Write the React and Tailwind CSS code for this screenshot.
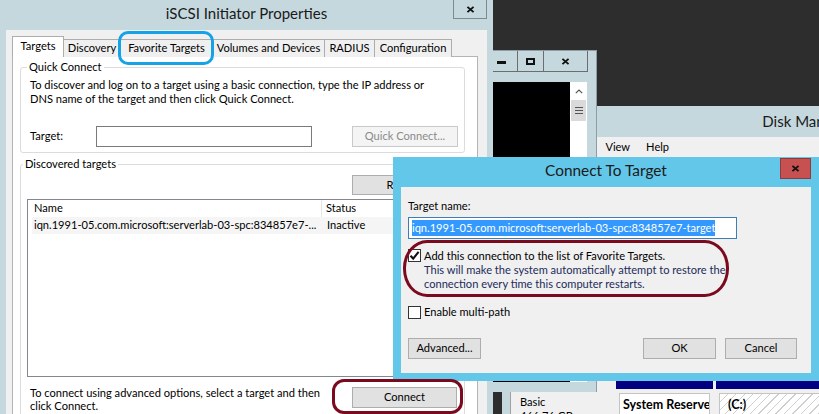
import React from 'react';

function Cross({ className = '', color = '#111' }) {
  return (
    <svg viewBox="0 0 10 8" className={className}>
      <path d="M1.5 1 L8.5 7 M8.5 1 L1.5 7" stroke={color} strokeWidth="2.2" fill="none" />
    </svg>
  );
}

function Button({ children, className = '', disabled }) {
  const tone = disabled
    ? 'border-[#c9c9c9] bg-[#f4f4f4] text-[#8a8a8a]'
    : 'border-[#adadad] bg-[#e1e1e1] text-black';
  return (
    <div className={`flex items-center justify-center whitespace-nowrap border ${tone} ${className}`}>{children}</div>
  );
}

function Check({ checked }) {
  return (
    <div className="w-[13px] h-[13px] shrink-0 border border-[#333] bg-white flex items-center justify-center">
      {checked && (
        <svg viewBox="0 0 11 11" className="w-[11px] h-[11px]">
          <path d="M1.5 5.8 L4.2 8.6 L9.6 1.8" stroke="#111" strokeWidth="2.1" fill="none" />
        </svg>
      )}
    </div>
  );
}

function IscsiWindow() {
  const tabs = [
    ['Discovery', 'w-[57px]'],
    ['Favorite Targets', 'w-[92px]'],
    ['Volumes and Devices', 'w-[112px]'],
    ['RADIUS', 'w-[50px]'],
    ['Configuration', 'w-[77px]'],
  ];

  return (
    <div className="absolute left-0 top-0 z-30 w-[493px] h-[440px] flex flex-col bg-[#c5d8de] px-[6px]">
      {/* title bar */}
      <div className="relative h-[30px] shrink-0 flex items-center justify-center">
        <span className="text-[15px] text-[#1a1a1a] -mt-[3px]">iSCSI Initiator Properties</span>
        <div className="absolute right-0 top-0 w-[34px] h-[19px] border border-t-0 border-[#7c8b90] flex items-center justify-center">
          <Cross className="w-[9px] h-[7px]" />
        </div>
      </div>

      <div className="flex-1 bg-[#f0f0f0] pl-[6px] pr-[9px] pt-[6px]">
        {/* tabs */}
        <div className="relative z-10 flex items-end h-[21px]">
          <div className="w-[52px] h-[21px] bg-white border border-b-0 border-[#adadad] flex items-center justify-center pb-[2px]">
            Targets
          </div>
          {tabs.map(([t, w]) => (
            <div key={t} className={`${w} h-[18px] bg-[#f0f0f0] border border-b-0 border-l-0 border-[#adadad] flex items-center justify-center whitespace-nowrap`}>
              {t}
            </div>
          ))}
        </div>

        <div className="-mt-px h-[400px] bg-white border border-[#b4b4b4] pl-[7px] pr-[12px] pt-[3px]">
          {/* Quick Connect */}
          <fieldset className="border border-[#dcdcdc] rounded-[3px] pl-[9px] pr-[6px] pb-[5px]">
            <legend className="-ml-[3px] px-[2px] leading-[14px]">Quick Connect</legend>
            <p className="mt-[4px] leading-[14px] whitespace-nowrap">
              To discover and log on to a target using a basic connection, type the IP address or
              <br />
              DNS name of the target and then click Quick Connect.
            </p>
            <div className="mt-[20px] flex items-center">
              <span className="w-[66px]">Target:</span>
              <div className="w-[216px] h-[21px] border border-[#7a7a7a] bg-white" />
              <Button disabled className="ml-[40px] w-[106px] h-[21px]">Quick Connect...</Button>
            </div>
          </fieldset>

          {/* Discovered targets */}
          <fieldset className="mt-[4px] border border-[#dcdcdc] rounded-[3px] px-[6px] h-[280px]">
            <legend className="-ml-[4px] px-[2px] leading-[14px]">Discovered targets</legend>
            <div className="mt-[4px] flex justify-end">
              <Button className="w-[106px] h-[20px]">Refresh</Button>
            </div>
            <div className="mt-[4px] h-[178px] border border-[#828790] bg-white">
              <div className="flex h-[17px] items-center">
                <div className="w-[294px] h-full pl-[6px] border-r border-[#e5e5e5] flex items-center">Name</div>
                <div className="pl-[4px]">Status</div>
              </div>
              <div className="flex h-[17px] items-center ml-[4px] bg-[#f5f5f5]">
                <div className="w-[290px] pl-[2px] whitespace-nowrap overflow-hidden">iqn.1991-05.com.microsoft:serverlab-03-spc:834857e7-...</div>
                <div className="pl-[5px]">Inactive</div>
              </div>
            </div>
            <div className="mt-[10px] flex justify-between items-start">
              <p className="ml-[3px] -mt-[1px] leading-[13px] whitespace-nowrap">
                To connect using advanced options, select a target and then
                <br />
                click Connect.
              </p>
              <Button className="w-[105px] h-[21px] mr-[1px]">Connect</Button>
            </div>
          </fieldset>
        </div>
      </div>
    </div>
  );
}

function ConsoleWindow() {
  return (
    <div className="absolute left-[470px] top-[50px] z-20 w-[127px] h-[342px] flex flex-col bg-[#c5d8de] border-t border-r border-[#8d9da3]">
      <div className="h-[21px] flex justify-end pr-[8px]">
        <div className="w-[26px] h-full border-l border-b border-[#6d6d6d] flex items-end justify-end pr-[11px] pb-[7px]">
          <div className="w-[9px] h-[3px] bg-[#111]" />
        </div>
        <div className="w-[26px] h-full border-l border-b border-[#6d6d6d] flex items-center justify-center">
          <div className="w-[9px] h-[7px] border-2 border-[#111]" />
        </div>
        <div className="w-[45px] h-full border-l border-r border-b border-[#6d6d6d] flex items-center justify-center">
          <Cross className="w-[9px] h-[7px]" />
        </div>
      </div>
      <div className="mt-[10px] mr-[9px] ml-[9px] h-[300px] flex">
        <div className="flex-1 bg-black" />
        <div className="w-[17px] bg-white flex flex-col">
          <div className="h-[18px] flex items-center justify-center">
            <svg viewBox="0 0 8 5" className="w-[8px] h-[5px]">
              <path d="M0.8 4.2 L4 1 L7.2 4.2" stroke="#555" strokeWidth="1.2" fill="none" />
            </svg>
          </div>
          <div className="h-[21px] mx-[1px] bg-[#dadada] flex flex-col items-center justify-center gap-[2px]">
            <div className="w-[8px] h-px bg-[#555]" />
            <div className="w-[8px] h-px bg-[#555]" />
            <div className="w-[8px] h-px bg-[#555]" />
          </div>
        </div>
      </div>
    </div>
  );
}

function DiskWindow() {
  return (
    <div className="absolute left-[502px] top-[106px] z-10 w-[640px] h-[330px] flex flex-col bg-[#c5d8de] px-[8px]">
      <div className="h-[31px] shrink-0 flex items-center justify-center text-[15px] text-[#1a1a1a]">Disk Management</div>
      <div className="flex-1 bg-[#f0f0f0] flex flex-col">
        <div className="h-[21px] flex items-center pl-[6px]">
          <span className="px-[8px]">File</span>
          <span className="px-[8px]">Action</span>
          <span className="px-[8px]">View</span>
          <span className="px-[8px]">Help</span>
        </div>
        <div className="h-[223px] bg-white" />
        <div className="flex h-[60px]">
          <div className="w-[102px] border-l border-[#a0a0a0] pl-[9px] pt-[14px] leading-[14px]">
            <div>Basic</div>
            <div>466.76 GB</div>
          </div>
          <div className="ml-[4px] w-[97px] flex flex-col">
            <div className="h-[8px] bg-[#000080]" />
            <div className="flex-1 px-[3px] pt-[4px]">
              <div className="h-full bg-white border border-[#c4c4c4] pl-[3px] pt-[2px] font-bold text-[12.5px] whitespace-nowrap overflow-hidden">
                System Reserved
              </div>
            </div>
          </div>
          <div className="ml-[3px] flex-1 flex flex-col">
            <div className="h-[8px] bg-[#000080]" />
            <div className="flex-1 px-[3px] pt-[4px]">
              <div className="h-full border border-[#c4c4c4] pl-[8px] pt-[2px] font-bold text-[12.5px] bg-[repeating-linear-gradient(135deg,#ffffff_0px,#ffffff_5px,#cfcfcf_5px,#cfcfcf_6px)]">
                (C:)
              </div>
            </div>
          </div>
        </div>
      </div>
    </div>
  );
}

function ConnectDialog() {
  return (
    <div className="absolute left-[393px] top-[157px] z-40 w-[426px] h-[224px] flex flex-col bg-[#62c7e9] px-[8px] pb-[8px]">
      <div className="relative h-[30px] shrink-0 flex items-center justify-center">
        <span className="text-[15.4px] text-[#1a1a1a] -mt-[2px]">Connect To Target</span>
        <div className="absolute right-0 top-[1px] w-[31px] h-[21px] bg-[#c75050] border border-[#8e3b3b] flex items-center justify-center">
          <Cross className="w-[9px] h-[7px]" />
        </div>
      </div>
      <div className="flex-1 bg-[#f0f0f0] pl-[7px] pr-[14px] pt-[12px]">
        <div className="leading-[14px]">Target name:</div>
        <div className="mt-[4px] w-[329px] h-[22px] border border-[#3f7eb3] bg-white flex items-center pl-[3px]">
          <span className="bg-[#3399ff] text-white leading-[16px] whitespace-nowrap">
            iqn.1991-05.com.microsoft:serverlab-03-spc:834857e7-target
          </span>
        </div>
        <div className="mt-[10px] flex">
          <Check checked />
          <div className="ml-[3px] leading-[14px]">
            <div>Add this connection to the list of Favorite Targets.</div>
            <div className="text-[#1d2b5a]">
              This will make the system automatically attempt to restore the
              <br />
              connection every time this computer restarts.
            </div>
          </div>
        </div>
        <div className="mt-[13px] flex items-center">
          <Check />
          <span className="ml-[3px]">Enable multi-path</span>
        </div>
        <div className="mt-[17px] flex items-center">
          <Button className="w-[73px] h-[21px]">Advanced...</Button>
          <Button className="ml-auto w-[73px] h-[21px] border-[#3c7fb1]">OK</Button>
          <Button className="ml-[9px] w-[72px] h-[21px]">Cancel</Button>
        </div>
      </div>
    </div>
  );
}

export default function App() {
  return (
    <div className="relative w-[819px] h-[414px] overflow-hidden bg-[#2d2d2d] font-['Lato',sans-serif] text-[11.1px] text-black">
      <DiskWindow />
      <ConsoleWindow />
      <IscsiWindow />
      <ConnectDialog />

      {/* annotation marks drawn over the screenshot */}
      <div className="absolute z-50 left-[118px] top-[31px] w-[96px] h-[34px] border-[3px] border-[#16a2e6] rounded-[10px]" />
      <div className="absolute z-50 left-[332px] top-[379px] w-[131px] h-[35px] border-[3px] border-[#7c0a1e] rounded-[12px]" />
      <div className="absolute z-50 left-[403px] top-[240px] w-[326px] h-[57px] border-[3px] border-[#7c0a1e] rounded-[24px/28px]" />
    </div>
  );
}
